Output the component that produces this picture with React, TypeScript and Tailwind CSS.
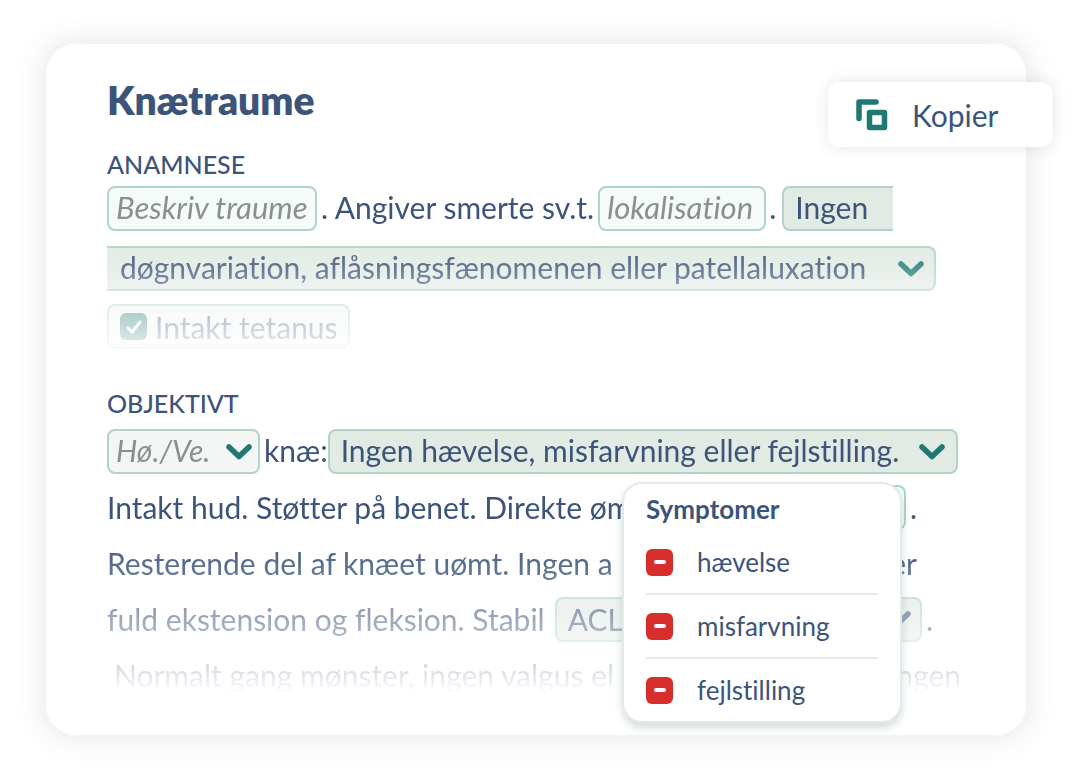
import { useState } from "react";
import type { ReactNode } from "react";

const symptoms = ["hævelse", "misfarvning", "fejlstilling"];

function Chevron({ className = "text-[#1f7872]" }: { className?: string }) {
  return (
    <svg viewBox="0 0 26 16" className={`w-[26px] h-4 shrink-0 pointer-events-none ${className}`} fill="none" aria-hidden="true">
      <path d="M3 3L13 12.5L23 3" stroke="currentColor" strokeWidth="5.5" strokeLinecap="round" strokeLinejoin="round" />
    </svg>
  );
}

function CopyIcon() {
  return (
    <svg viewBox="0 0 32 32" className="w-8 h-8 shrink-0 text-[#1f7872]" fill="none" stroke="currentColor" strokeWidth="5.5" aria-hidden="true">
      <path d="M3 19.5V3H20" strokeLinecap="round" strokeLinejoin="round" />
      <rect x="13.5" y="13.5" width="15" height="15" strokeLinejoin="round" />
    </svg>
  );
}

function TextField({ label, className }: { label: string; className: string }) {
  return (
    <input
      type="text"
      aria-label={label}
      placeholder={label}
      className={`h-[45px] px-[7px] pb-1 rounded-lg border-2 border-[#b0d5c8] bg-[#f5fbf9] text-[31px] italic text-[#8b8f8e] placeholder:text-[#8b8f8e] placeholder:opacity-100 focus:outline-none ${className}`}
    />
  );
}

function Heading({ children }: { children: ReactNode }) {
  return <h2 className="h-8 leading-8 text-[25px] font-medium">{children}</h2>;
}

function SymptomMenu() {
  const [removed, setRemoved] = useState<string[]>([]);

  const toggle = (name: string) =>
    setRemoved((prev) => (prev.includes(name) ? prev.filter((n) => n !== name) : [...prev, name]));

  return (
    <div className="absolute right-[63px] top-[95px] w-[280px] px-[22px] pt-[7px] rounded-[20px] border-2 border-[#e1ece6] bg-white shadow-[0_5px_8px_rgba(60,80,100,0.2)]">
      <h3 className="mb-1 h-9 leading-9 text-[26px] font-bold">Symptomer</h3>
      <ul className="divide-y-2 divide-[#e4e6ec]">
        {symptoms.map((name) => (
          <li key={name}>
            <label className="h-[62px] flex items-center gap-6 text-[26px] cursor-pointer">
              <span className="grid place-items-center shrink-0">
                <input
                  type="checkbox"
                  checked={!removed.includes(name)}
                  onChange={() => toggle(name)}
                  className="col-start-1 row-start-1 appearance-none w-[27px] h-[27px] rounded-md bg-[#d72d2d]"
                />
                <span className="col-start-1 row-start-1 w-3 h-1 rounded-full bg-white pointer-events-none" />
              </span>
              {name}
            </label>
          </li>
        ))}
      </ul>
    </div>
  );
}

export default function App() {
  const [tetanus, setTetanus] = useState(true);
  const [open, setOpen] = useState(true);

  return (
    <main className="pt-11 pb-11 pl-[46px] pr-[54px] bg-white font-[Lato,'Open_Sans',sans-serif] text-[30px] leading-9 text-[#3c5479] whitespace-nowrap [font-variant-ligatures:none]">
      <article className="relative px-[61px] pt-9 pb-8 rounded-[30px] bg-white shadow-[0_0_22px_10px_rgba(50,80,70,0.08)]">
        <h1 className="h-10 leading-10 text-[39px] font-extrabold">Knætraume</h1>

        <button
          type="button"
          className="absolute -right-[27px] top-[38px] w-[225px] h-[65px] pl-7 flex items-center gap-6 rounded-xl bg-white shadow-[0_0_16px_rgba(50,80,70,0.14)] cursor-pointer"
        >
          <CopyIcon />
          Kopier
        </button>

        <section className="mt-7">
          <Heading>ANAMNESE</Heading>
          <div className="mt-[6px] mask-[linear-gradient(to_bottom,black_30%,rgb(0_0_0/0.8)_50%,rgb(0_0_0/0.42)_73%,rgb(0_0_0/0.12)_100%)]">
            <div className="flex items-center">
              <TextField label="Beskriv traume" className="w-[210px]" />
              <span className="ml-1 pb-1">. Angiver smerte sv.t.</span>
              <TextField label="lokalisation" className="ml-1 w-[168px]" />
              <span className="ml-[3px] pb-1">.</span>
              <button type="button" className="ml-1.5 h-[45px] w-[111px] pl-[11px] pb-1 text-left rounded-l-lg border-2 border-r-0 border-[#b0d5c8] bg-[#e1eae3]">
                Ingen
              </button>
            </div>
            <button
              type="button"
              aria-haspopup="listbox"
              className="mt-[15px] h-[45px] w-[829px] pl-[13px] pr-[10px] flex items-center justify-between rounded-r-lg border-2 border-l-0 border-[#b0d5c8] bg-[#e1eae3]"
            >
              <span className="pb-1">døgnvariation, aflåsningsfænomenen eller patellaluxation</span>
              <Chevron />
            </button>
            <label className="mt-[13px] h-[45px] w-[243px] pl-[11px] flex items-center gap-2 rounded-lg border-2 border-[#b0d5c8] bg-[#f0f3f2] cursor-pointer">
              <span className="grid place-items-center">
                <input
                  type="checkbox"
                  checked={tetanus}
                  onChange={(e) => setTetanus(e.target.checked)}
                  className="col-start-1 row-start-1 appearance-none w-[27px] h-[27px] rounded-md bg-[#1f7872]"
                />
                <svg viewBox="0 0 16 14" className="col-start-1 row-start-1 w-4 h-[14px] pointer-events-none" fill="none" aria-hidden="true">
                  <path d="M2 8L6 12L14 2" stroke="white" strokeWidth="3" strokeLinecap="round" strokeLinejoin="round" />
                </svg>
              </span>
              <span>Intakt tetanus</span>
            </label>
          </div>
        </section>

        <section className="relative mt-[38px]">
          <Heading>OBJEKTIVT</Heading>
          <div className="mt-[10px] mask-[linear-gradient(to_bottom,black_34%,rgb(0_0_0/0.86)_49%,rgb(0_0_0/0.5)_70%,rgb(0_0_0/0.15)_90%,transparent_97%)]">
            <div className="flex items-center">
              <span className="grid items-center">
                <select
                  aria-label="Side"
                  className="col-start-1 row-start-1 appearance-none w-[153px] h-[45px] px-[7px] pb-1 rounded-lg border-2 border-[#b0d5c8] bg-[#f3f6f5] italic text-[#8b8f8e]"
                >
                  <option>Hø./Ve.</option>
                </select>
                <span className="col-start-1 row-start-1 justify-self-end flex mr-2 pointer-events-none">
                  <Chevron />
                </span>
              </span>
              <span className="ml-1 pb-1">knæ:</span>
              <button
                type="button"
                aria-expanded={open}
                onClick={() => setOpen(!open)}
                className="h-[45px] w-[630px] pl-[11px] pr-[11px] flex items-center justify-between rounded-lg border-2 border-[#b0d5c8] bg-[#e1eae3]"
              >
                <span className="pb-1">Ingen hævelse, misfarvning eller fejlstilling.</span>
                <Chevron />
              </button>
            </div>
            <div className="mt-[5px] h-14 pr-12 flex items-center justify-between">
              <span>Intakt hud. Støtter på benet. Direkte øm</span>
              <span className="flex items-center gap-1">
                <span className="w-[120px] h-[45px] rounded-lg border-2 border-[#b0d5c8] bg-[#f5fbf9]" />
                .
              </span>
            </div>
            <div className="h-14 pr-12 flex items-center justify-between">
              <span>Resterende del af knæet uømt. Ingen a</span>
              <span>er</span>
            </div>
            <div className="h-14 pr-8 flex items-center">
              <span>fuld ekstension og fleksion. Stabil</span>
              <button
                type="button"
                aria-haspopup="listbox"
                className="ml-[10px] grow h-[45px] pl-[11px] pr-[9px] flex items-center justify-between rounded-lg border-2 border-[#b0d5c8] bg-[#e1eae3]"
              >
                ACL
                <Chevron className="text-[#3c5479]" />
              </button>
              <span className="ml-1">.</span>
            </div>
            <div className="h-14 pl-[7px] pr-1 flex items-center justify-between">
              <span>Normalt gang mønster, ingen valgus el</span>
              <span>ingen</span>
            </div>
          </div>
          {open && <SymptomMenu />}
        </section>
      </article>
    </main>
  );
}
